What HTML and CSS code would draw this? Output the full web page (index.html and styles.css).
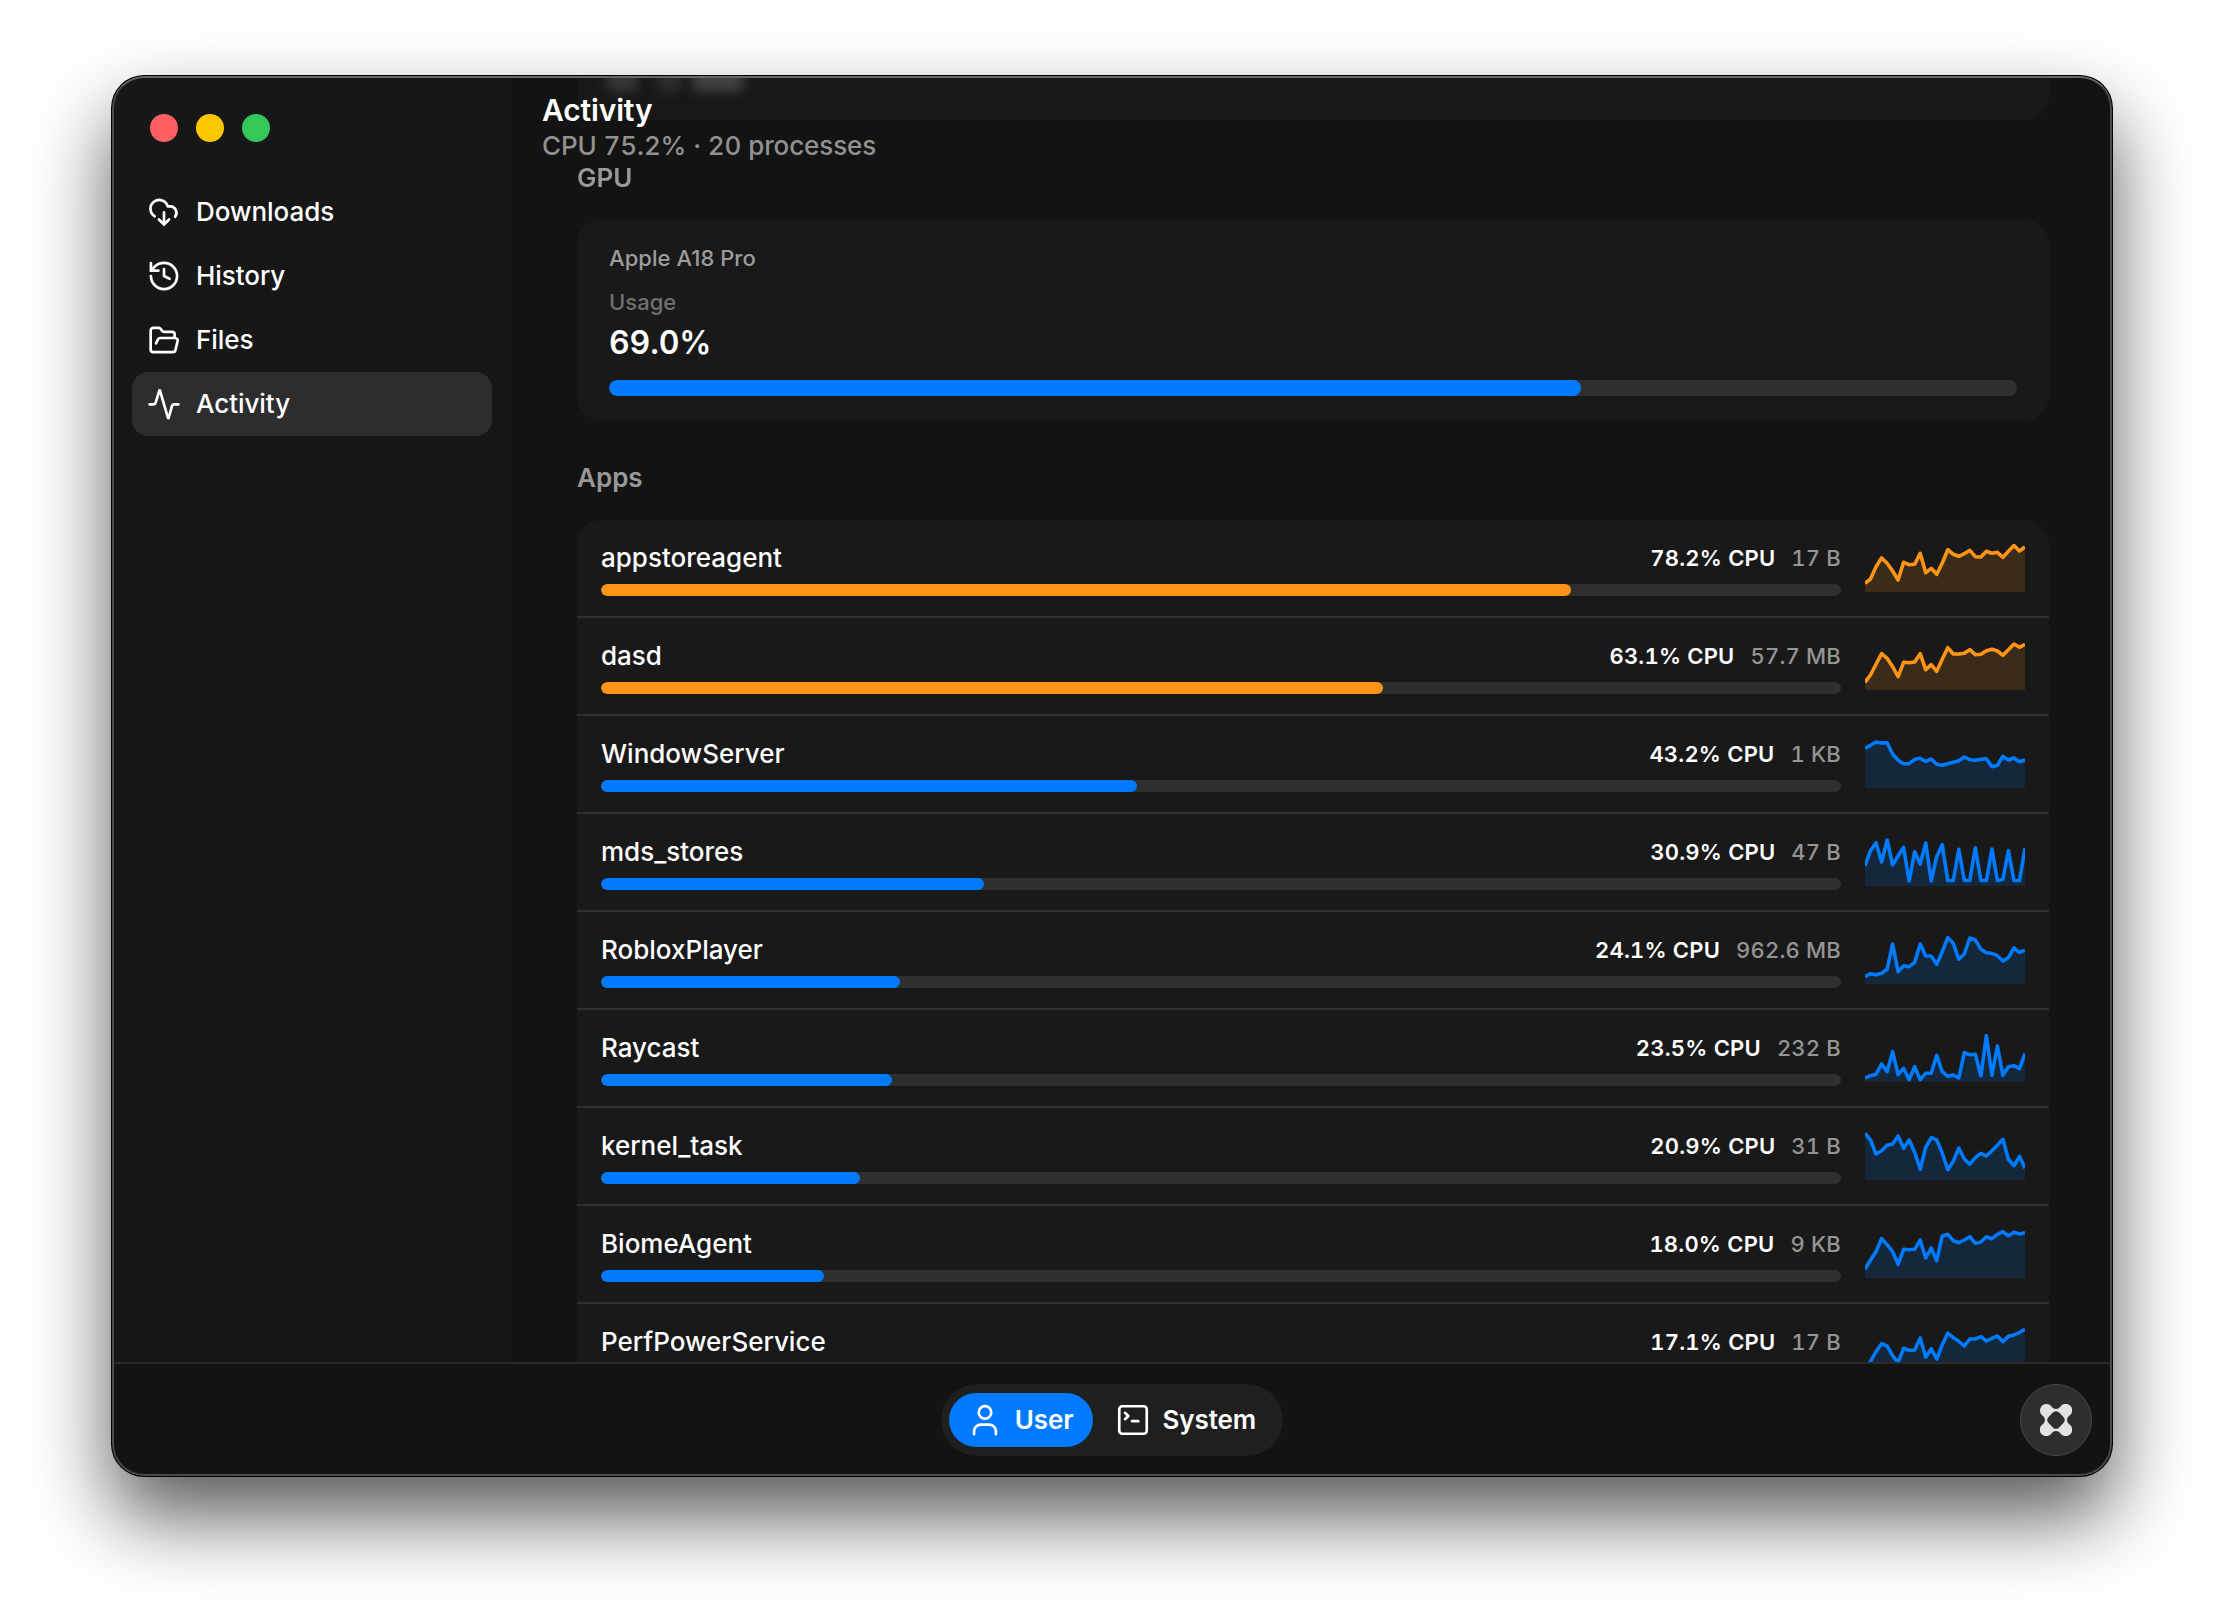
FILE: index.html
```html
<!DOCTYPE html>
<html lang="en">
<head>
  <meta charset="UTF-8" />
  <title>Activity</title>
  <link rel="stylesheet" href="styles.css">
</head>
<body>
  <div class="window">
    <div class="body">
      <div class="sidebar">
        <div class="lights">
          <span class="light red"></span>
          <span class="light yellow"></span>
          <span class="light green"></span>
        </div>
        <div class="nav">
          <div class="nav-item">
            <svg class="icon" viewBox="0 0 24 24"><path d="M5 15.2A6.6 6.6 0 1 1 14.8 7.8h2a4.8 4.8 0 0 1 3.5 7.8" /><path d="M12 12.3v9" /><path d="m8.2 17.6 3.8 3.8 3.8-3.8" /></svg>
            <span>Downloads</span>
          </div>
          <div class="nav-item">
            <svg class="icon" viewBox="0 0 24 24"><path d="M2.2 12A9.8 9.8 0 1 0 12 2.2 10.4 10.4 0 0 0 4.8 5.1L2.2 8" /><path d="M2.2 2.4V8h5.6" /><path d="M12 6.8V12l4.2 2.1" /></svg>
            <span>History</span>
          </div>
          <div class="nav-item">
            <svg class="icon" viewBox="0 0 24 24"><path d="m6 14.5 1.5-2.9A2 2 0 0 1 9.2 10.5H20.5a1.8 1.8 0 0 1 1.7 2.3l-1.6 6.7a2 2 0 0 1-2 1.6H4a2 2 0 0 1-2-2V4.9a2 2 0 0 1 2-2h3.9a2 2 0 0 1 1.7.9l.9 1.2a2 2 0 0 0 1.7.9H18a2 2 0 0 1 2 2V10.5" /></svg>
            <span>Files</span>
          </div>
          <div class="nav-item active">
            <svg class="icon" viewBox="0 0 24 24"><path d="M22.8 12.3h-3a2 2 0 0 0-1.9 1.5l-2.4 8.7a.25.25 0 0 1-.48 0L9 2a.25.25 0 0 0-.48 0L5.8 10.8A2 2 0 0 1 3.9 12.3H1.2" /></svg>
            <span>Activity</span>
          </div>
        </div>
      </div>

      <div class="main">
        <div class="prev-card">
          <i class="smudge"></i>
          <i class="smudge small"></i>
          <i class="smudge wide"></i>
        </div>
        <div class="header">
          <div class="title">Activity</div>
          <div class="subtitle">CPU 75.2% · 20 processes</div>
        </div>
        <div class="content">
          <div class="section gpu-label">GPU</div>
          <div class="card">
            <div class="gpu-name">Apple A18 Pro</div>
            <div class="gpu-usage">Usage</div>
            <div class="gpu-value">69.0%</div>
            <div class="bar big"><div class="fill" style="width: 69%"></div></div>
          </div>
          <div class="section apps-label">Apps</div>
          <div class="list" id="list"></div>
        </div>
      </div>
    </div>

    <div class="footer">
      <div class="switch">
        <div class="tab active">
          <svg class="icon" viewBox="0 0 24 24"><circle cx="12" cy="6.3" r="4.7" /><path d="M3.8 22.6V20.5a5 5 0 0 1 5-5h6.4a5 5 0 0 1 5 5v2.1" /></svg>
          <span>User</span>
        </div>
        <div class="tab">
          <svg class="icon" viewBox="0 0 24 24"><rect x="1.7" y="1.7" width="20.6" height="20.6" rx="2.2" /><path d="m6 6.6 2.5 2.4L6 11.4" /><path d="M11.3 12.9h4.6" /></svg>
          <span>System</span>
        </div>
      </div>
      <div class="fab">
        <svg viewBox="0 0 32 32"><path fill-rule="evenodd" d="M6.5 0a6.5 6.5 0 0 1 5 2.4C13 4.2 14.2 4.9 16 4.9s3-.7 4.5-2.5A6.5 6.5 0 1 1 29.6 11.5C27.8 13 27.1 14.2 27.1 16s.7 3 2.5 4.5A6.5 6.5 0 1 1 20.5 29.6C19 27.8 17.8 27.1 16 27.1s-3 .7-4.5 2.5A6.5 6.5 0 1 1 2.4 20.5C4.2 19 4.9 17.8 4.9 16s-.7-3-2.5-4.5A6.5 6.5 0 0 1 6.5 0ZM16 7.2c-1.8 0-2.9.9-4.4 2.6C10.1 11.5 7.2 13.8 7.2 16s2.9 4.5 4.4 6.2c1.5 1.7 2.6 2.6 4.4 2.6s2.9-.9 4.4-2.6c1.5-1.7 4.4-4 4.4-6.2s-2.9-4.5-4.4-6.2C18.9 8.1 17.8 7.2 16 7.2Z" /></svg>
      </div>
    </div>
  </div>

  <script src="app.js"></script>
</body>
</html>
```
FILE: styles.css
```css
* { box-sizing: border-box; }
body { margin: 0; width: 2224px; height: 1624px; padding: 76px 112px; background: #fff; font-family: Inter, "Liberation Sans", sans-serif; color: #fff; overflow: hidden; }
.window { position: relative; width: 2000px; height: 1400px; border-radius: 32px; background: #131313; overflow: hidden; display: flex; flex-direction: column; box-shadow: 0 0 0 1px #000, 0 40px 80px rgba(0,0,0,0.66); }
.window::after { content: ""; position: absolute; inset: 0; border: 2px solid #4a4a4a; border-top-color: #666; border-radius: 32px; pointer-events: none; }
.body { display: flex; height: 1286px; overflow: hidden; }

.sidebar { width: 400px; background: #171717; padding: 38px 20px 0; }
.lights { display: flex; gap: 18px; padding-left: 18px; margin-bottom: 38px; }
.light { width: 28px; height: 28px; border-radius: 50%; }
.red { background: #ff5f61; }
.yellow { background: #fbc800; }
.green { background: #34c759; }
.nav-item { height: 64px; display: flex; align-items: center; gap: 16px; padding: 0 16px 1px; border-radius: 16px; font-size: 26px; font-weight: 500; }
.nav-item span { padding-bottom: 1px; letter-spacing: -0.05px; }
.nav-item.active { background: #2d2d2d; }
.icon { width: 32px; height: 32px; fill: none; stroke: #fff; stroke-width: 2; stroke-linecap: round; stroke-linejoin: round; }

.main { flex: 1; position: relative; overflow: hidden; }
.header { position: absolute; top: 15px; left: 30px; z-index: 2; font-variant-numeric: tabular-nums; }
.title { font-size: 30px; font-weight: 600; line-height: 38px; letter-spacing: -0.15px; }
.subtitle { font-size: 26px; font-weight: 500; line-height: 34px; color: #919191; letter-spacing: -0.11px; }
/* bottom of the card that has scrolled under the header */
.prev-card { position: absolute; top: 0; left: 65px; width: 1472px; height: 44px; background: #181818; border-radius: 0 0 24px 24px; overflow: hidden; display: flex; gap: 20px; padding-left: 30px; }
.smudge { width: 30px; height: 24px; margin-top: -9px; background: #383838; filter: blur(6px); }
.smudge.small { width: 24px; background: #2e2e2e; }
.smudge.wide { width: 50px; margin-left: -8px; background: #434343; }
.content { padding: 86px 63px 0 65px; }
.section { font-size: 26px; font-weight: 600; line-height: 32px; color: #999; }
.gpu-label { margin-bottom: 26px; filter: blur(0.5px); }
.apps-label { margin: 42px 0 26px; }
.card { height: 200px; background: #191919; border-radius: 24px; padding: 24px 32px; }
.gpu-name { font-size: 22px; font-weight: 500; line-height: 28px; color: #9c9c9c; letter-spacing: 0.05px; }
.gpu-usage { margin-top: 16px; font-size: 22px; font-weight: 500; line-height: 28px; color: #707070; }
.gpu-value { margin-top: 7px; font-size: 32px; font-weight: 600; line-height: 40px; letter-spacing: -0.1px; font-variant-numeric: tabular-nums; }
.bar { height: 12px; background: #2f2f2f; border-radius: 6px; overflow: hidden; }
.bar.big { height: 16px; border-radius: 8px; margin-top: 17px; }
.fill { height: 100%; border-radius: 8px; background: #007aff; }
.fill.hot { background: #ff9418; }

.list { background: #191919; border-radius: 24px 24px 0 0; }
.row { display: flex; align-items: center; gap: 24px; height: 98px; padding: 0 24px; border-bottom: 2px solid #2f2f2f; }
.info { flex: 1; padding-top: 2px; }
.line { display: flex; align-items: center; margin-bottom: 10px; line-height: 32px; }
.name { flex: 1; font-size: 26px; font-weight: 500; }
.cpu, .mem { font-size: 22px; letter-spacing: 0.2px; font-variant-numeric: tabular-nums; }
.cpu { font-weight: 600; }
.mem { margin-left: 16px; font-weight: 500; color: #959595; }
.spark { width: 160px; height: 48px; }
.spark polyline { fill: none; stroke: #007aff; stroke-width: 3.6; stroke-linejoin: round; }
.spark polygon { fill: #007aff; opacity: 0.15; }
.spark.hot polyline { stroke: #ff9418; }
.spark.hot polygon { fill: #ff9418; }

.footer { position: relative; flex: 1; display: flex; justify-content: center; align-items: flex-start; border-top: 2px solid #2a2a2a; padding-top: 20px; }
.switch { display: flex; gap: 4px; height: 72px; padding: 9px 8px; border-radius: 36px; background: #1f1f1f; }
.tab { display: flex; align-items: center; gap: 14px; height: 54px; padding: 0 19px 0 20px; border-radius: 27px; font-size: 26px; font-weight: 600; }
.tab span { padding-bottom: 2px; letter-spacing: -0.1px; }
.tab.active { background: #007aff; }
.fab { position: absolute; right: 20px; top: 20px; width: 72px; height: 72px; border-radius: 50%; background: #2e2e2e; border: 1px solid #484848; display: flex; align-items: center; justify-content: center; }
.fab svg { width: 32px; height: 32px; fill: #e2e2e2; }
```
FILE: app.js
```js
const apps = [
  { name: 'appstoreagent', cpu: 78.2, mem: '17 B', line: [39.3,35,22.7,14,19.3,27,36,18.3,20.7,20.3,9.3,28.7,24.3,30.3,19.3,5.7,10.3,12.3,9.7,6.3,12.7,13,7.3,9.3,8.3,13.3,7.3,1.5,7,3] },
  { name: 'dasd', cpu: 63.1, mem: '57.7 MB', line: [40.3,33,22.3,11.7,16.3,24.7,34.7,20.3,20.7,20,11.7,27.7,22.7,29.3,17.3,5.7,12,12,11.3,7.7,12.7,12.3,8.7,7.3,9,13.3,7.7,2,5.3,2.3] },
  { name: 'WindowServer', cpu: 43.2, mem: '1 KB', line: [8.3,5.3,2,3,2.7,14,20.3,23.7,23.7,19.3,18.3,21.3,19,24.3,25.3,23.7,22.3,20.7,17,19.7,20.3,19.3,18.7,26.7,25.3,16.3,20,18,21.7,20] },
  { name: 'mds_stores', cpu: 30.9, mem: '47 B', line: [28,12.7,4.7,24,2,27,18,9.3,43,13.7,26,5,43,18.7,6.7,42.5,42.5,11.3,42.5,42.5,9.7,42.5,42.5,11,42.5,41.3,12.7,42.5,42.5,10.3] },
  { name: 'RobloxPlayer', cpu: 24.1, mem: '962.6 MB', line: [40.7,37.7,38.7,37.3,33.3,8,35.7,29.7,30.7,26.3,8,20,20,28.3,15.7,1.7,7.3,23.3,18,2,4,13.3,16.7,17.3,19.7,25,21.7,12,16.3,14.3] },
  { name: 'Raycast', cpu: 23.5, mem: '232 B', line: [44,41.7,40.3,30,37.7,17.7,40.7,34.3,45.7,32.7,45.7,39.3,39.3,21.3,37.7,42.3,41,44,18.7,20.7,20.3,41.7,1.7,41.3,12,41.3,32.7,31.7,34.7,19.3] },
  { name: 'kernel_task', cpu: 20.9, mem: '31 B', line: [1.3,8,22,18.7,13.3,12,4,16.3,8,20.3,37.3,15.3,5.7,8,20.7,37.7,29.3,16,27,32.3,25.7,21.3,24,18.7,13.3,7.3,27.3,33.7,24.3,36.3] },
  { name: 'BiomeAgent', cpu: 18.0, mem: '9 KB', line: [39.3,30,21.7,8.7,14.7,21.7,34.3,19.3,19.7,19.3,10,28,18,30.7,6,4.3,10.7,12.7,10,6.7,13.3,12,6.7,8.7,4.3,1.7,5.7,2.3,4,2.7] },
  { name: 'PerfPowerService', cpu: 17.1, mem: '17 B', line: [40.3,33.3,23.7,15.7,18,27.7,34.7,20.3,22.3,22,10,29.3,20.7,31,17,5,9.7,13.3,18,11,11,8.7,13,10.3,8,13.7,8.3,7,4.3,1.3] }
];

const list = document.getElementById('list');

apps.forEach(app => {
  const hot = app.cpu > 50 ? ' hot' : '';
  const step = 160 / (app.line.length - 1);
  const points = app.line.map((y, i) => `${(i * step).toFixed(1)},${y}`).join(' ');
  const row = document.createElement('div');
  row.className = 'row';
  row.innerHTML = `
    <div class="info">
      <div class="line">
        <span class="name">${app.name}</span>
        <span class="cpu">${app.cpu.toFixed(1)}% CPU</span>
        <span class="mem">${app.mem}</span>
      </div>
      <div class="bar"><div class="fill${hot}" style="width: ${app.cpu}%"></div></div>
    </div>
    <svg class="spark${hot}" viewBox="0 0 160 48">
      <polygon points="0,48 ${points} 160,48" />
      <polyline points="${points}" />
    </svg>`;
  list.appendChild(row);
});
```
